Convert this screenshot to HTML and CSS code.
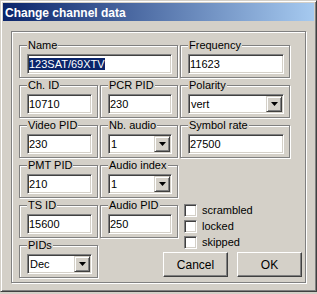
FILE: index.html
```html
<!DOCTYPE html>
<html lang="en">
<head>
    <meta charset="UTF-8">
    <title>Change channel data</title>
    <link rel="stylesheet" href="styles.css">
</head>
<body>
<div class="window">
    <div class="titlebar">Change channel data</div>
    <div class="content">
        <div class="frame">
            <fieldset class="group name">
                <legend>Name</legend>
                <div class="field"><span class="selected">123SAT/69XTV</span></div>
            </fieldset>
            <fieldset class="group freq">
                <legend>Frequency</legend>
                <div class="field">11623</div>
            </fieldset>

            <fieldset class="group chid">
                <legend>Ch. ID</legend>
                <div class="field">10710</div>
            </fieldset>
            <fieldset class="group pcr">
                <legend>PCR PID</legend>
                <div class="field">230</div>
            </fieldset>
            <fieldset class="group pol">
                <legend>Polarity</legend>
                <div class="field combo">
                    <span class="value">vert</span>
                    <span class="drop"><svg width="7" height="4"><polygon points="0,0 7,0 3.5,4"/></svg></span>
                </div>
            </fieldset>

            <fieldset class="group vpid">
                <legend>Video PID</legend>
                <div class="field">230</div>
            </fieldset>
            <fieldset class="group nba">
                <legend>Nb. audio</legend>
                <div class="field combo">
                    <span class="value">1</span>
                    <span class="drop"><svg width="7" height="4"><polygon points="0,0 7,0 3.5,4"/></svg></span>
                </div>
            </fieldset>
            <fieldset class="group sym">
                <legend>Symbol rate</legend>
                <div class="field">27500</div>
            </fieldset>

            <fieldset class="group pmt">
                <legend>PMT PID</legend>
                <div class="field">210</div>
            </fieldset>
            <fieldset class="group aidx">
                <legend>Audio index</legend>
                <div class="field combo">
                    <span class="value">1</span>
                    <span class="drop"><svg width="7" height="4"><polygon points="0,0 7,0 3.5,4"/></svg></span>
                </div>
            </fieldset>

            <fieldset class="group tsid">
                <legend>TS ID</legend>
                <div class="field">15600</div>
            </fieldset>
            <fieldset class="group apid">
                <legend>Audio PID</legend>
                <div class="field">250</div>
            </fieldset>
            <div class="checks">
                <label class="check"><span class="box"></span>scrambled</label>
                <label class="check"><span class="box"></span>locked</label>
                <label class="check"><span class="box"></span>skipped</label>
            </div>

            <fieldset class="group pids">
                <legend>PIDs</legend>
                <div class="field combo">
                    <span class="value">Dec</span>
                    <span class="drop"><svg width="7" height="4"><polygon points="0,0 7,0 3.5,4"/></svg></span>
                </div>
            </fieldset>
            <div class="buttons">
                <button type="button">Cancel</button>
                <button type="button">OK</button>
            </div>
        </div>
    </div>
</div>
</body>
</html>
```

FILE: styles.css
```css
body {
    margin: 0;
    background-color: #d4d0c8;
    font-family: "Liberation Sans", Arial, sans-serif;
    font-size: 11px;
    color: #000;
}
.window {
    box-sizing: border-box;
    width: 317px;
    height: 292px;
    padding: 2px;
    border: 1px solid;
    border-color: #d4d0c8 #404040 #404040 #d4d0c8;
    box-shadow: inset 1px 1px 0 #fff, inset -1px -1px 0 #808080;
}
.titlebar {
    box-sizing: border-box;
    height: 18px;
    padding: 1px 0 0 2px;
    line-height: 18px;
    font-size: 12px;
    font-weight: bold;
    color: #fff;
    background: linear-gradient(to right, #0a246a, #a6caf0);
}
.content {
    padding: 10px 8px 0;
}
.frame {
    box-sizing: border-box;
    height: 252px;
    padding: 7px 0 0 7px;
    border: 1px solid #808080;
    box-shadow: inset 1px 1px 0 #fff, 1px 1px 0 #fff;
    display: grid;
    grid-template-columns: 79px 78px 110px 1fr;
    grid-template-rows: repeat(6, 39px);
    column-gap: 2px;
    row-gap: 1px;
    grid-template-areas:
        "name name freq ."
        "chid pcr pol ."
        "vpid nba sym ."
        "pmt aidx . ."
        "tsid apid chk ."
        "pids btn btn btn";
}
.group {
    margin: 0;
    min-width: 0;
    padding: 2px 5px 3px 7px;
    border: 1px solid #808080;
    box-shadow: inset 1px 1px 0 #fff, 1px 1px 0 #fff;
}
.group legend {
    padding: 0 1px;
    line-height: 13px;
    background-color: #d4d0c8;
}
.name { grid-area: name; }
.freq { grid-area: freq; }
.chid { grid-area: chid; }
.pcr { grid-area: pcr; }
.pol { grid-area: pol; }
.vpid { grid-area: vpid; }
.nba { grid-area: nba; }
.sym { grid-area: sym; }
.pmt { grid-area: pmt; }
.aidx { grid-area: aidx; }
.tsid { grid-area: tsid; }
.apid { grid-area: apid; }
.pids { grid-area: pids; }

.field {
    box-sizing: border-box;
    height: 20px;
    padding: 0 1px;
    line-height: 18px;
    white-space: nowrap;
    overflow: hidden;
    background-color: #fff;
    border: 1px solid;
    border-color: #808080 #fff #fff #808080;
    box-shadow: inset 1px 1px 0 #404040, inset -1px -1px 0 #d4d0c8;
}
.selected {
    background-color: #0a246a;
    color: #fff;
}
.combo {
    display: flex;
    padding: 1px;
}
.combo .value {
    flex: 1;
    padding-left: 1px;
    line-height: 16px;
}
.drop {
    box-sizing: border-box;
    width: 16px;
    height: 16px;
    display: flex;
    align-items: center;
    justify-content: center;
    background-color: #d4d0c8;
    border: 1px solid;
    border-color: #d4d0c8 #404040 #404040 #d4d0c8;
    box-shadow: inset 1px 1px 0 #fff, inset -1px -1px 0 #808080;
}
.drop svg {
    display: block;
    fill: #000;
}

.checks {
    grid-area: chk;
    padding: 3px 0 0 4px;
}
.check {
    display: flex;
    align-items: center;
    gap: 5px;
    height: 16px;
}
.box {
    box-sizing: border-box;
    width: 13px;
    height: 13px;
    background-color: #fff;
    border: 1px solid;
    border-color: #808080 #fff #fff #808080;
    box-shadow: inset 1px 1px 0 #404040, inset -1px -1px 0 #d4d0c8;
}

.buttons {
    grid-area: btn;
    display: flex;
    justify-content: flex-end;
    align-items: flex-end;
    gap: 9px;
    padding: 0 3px 1px 0;
}
button {
    width: 65px;
    height: 25px;
    margin: 0;
    padding: 0;
    font: inherit;
    font-size: 12px;
    color: #000;
    background-color: #d4d0c8;
    border: 1px solid;
    border-color: #fff #404040 #404040 #fff;
    box-shadow: inset -1px -1px 0 #808080;
}
```
